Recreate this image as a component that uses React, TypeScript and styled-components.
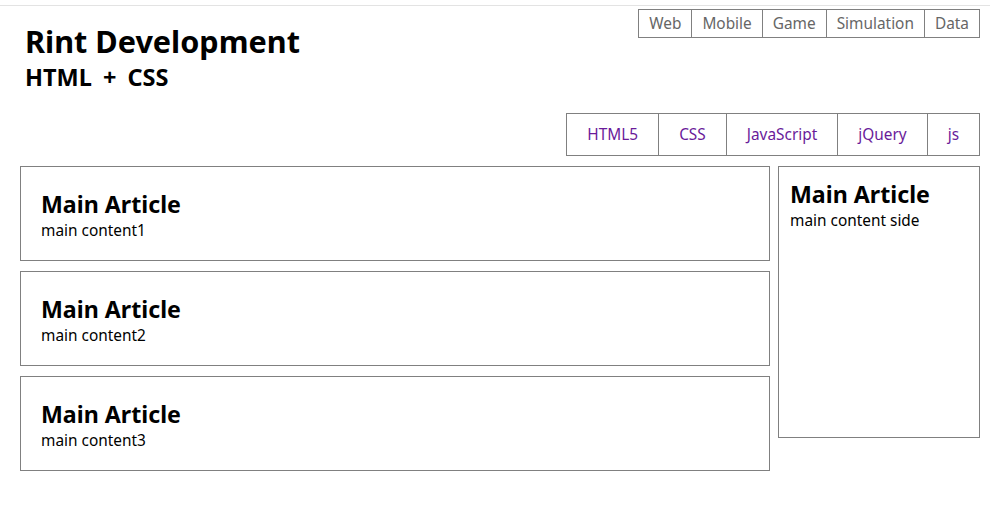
import React from 'react';
import styled, { createGlobalStyle } from 'styled-components';

const GlobalStyle = createGlobalStyle`
    body {
        margin: 0;
        font-family: "Noto Sans", "Noto Sans CJK KR", sans-serif;
        color: #000;
        background: #fff;
    }
`;

const TopRule = styled.div`
    height: 5px;
    border-bottom: 1px solid #e3e3e3;
`;

const Page = styled.div`
    width: 960px;
    padding: 3px 10px 0 20px;
`;

const Header = styled.header`
    display: flex;
    justify-content: space-between;
    align-items: flex-start;
    height: 104px;
`;

const TitleBlock = styled.div`
    padding: 13px 0 0 5px;
`;

const Title = styled.h1`
    margin: 0;
    font-size: 30.6px;
    line-height: 38px;
    font-weight: 700;
`;

const SubTitle = styled.h2`
    margin: 2px 0 0;
    font-size: 23.5px;
    line-height: 30px;
    font-weight: 700;
    word-spacing: 5px;
`;

const TopMenu = styled.ul`
    display: flex;
    margin: 0;
    padding: 0;
    list-style: none;
    border: 1px solid #808080;
`;

const TopItem = styled.li`
    padding: 1px 10px 0;
    font-size: 15.4px;
    line-height: 26px;
    color: #666;
    & + & {
        border-left: 1px solid #808080;
    }
`;

const SubNavRow = styled.nav`
    display: flex;
    justify-content: flex-end;
    margin-bottom: 10px;
`;

const SubMenu = styled.ul`
    display: flex;
    margin: 0;
    padding: 0;
    list-style: none;
    border: 1px solid #808080;
`;

const SubItem = styled.li`
    padding: 1px 20px 0;
    font-size: 15.4px;
    line-height: 40px;
    & + & {
        border-left: 1px solid #808080;
    }
`;

const SubLink = styled.a`
    color: #6a1b9a;
    text-decoration: none;
`;

const Content = styled.div`
    display: flex;
    align-items: flex-start;
    gap: 8px;
`;

const MainColumn = styled.section`
    display: flex;
    flex-direction: column;
    gap: 10px;
    width: 750px;
`;

const Article = styled.article<{ $side?: boolean }>`
    box-sizing: border-box;
    border: 1px solid #808080;
    padding: ${(p) => (p.$side ? '12px 11px' : '22px 20px')};
    height: ${(p) => (p.$side ? '272px' : '95px')};
    width: ${(p) => (p.$side ? '202px' : '750px')};
`;

const ArticleTitle = styled.h3`
    margin: 0;
    font-size: 23.2px;
    line-height: 30px;
    font-weight: 700;
`;

const ArticleText = styled.p`
    margin: 1px 0 0;
    font-size: 15.4px;
    line-height: 22px;
`;

const topMenu = ['Web', 'Mobile', 'Game', 'Simulation', 'Data'];
const subMenu = ['HTML5', 'CSS', 'JavaScript', 'jQuery', 'js'];

export default function App() {
    return (
        <>
            <GlobalStyle />
            <TopRule />
            <Page>
                <Header>
                    <TitleBlock>
                        <Title>Rint Development</Title>
                        <SubTitle>HTML + CSS</SubTitle>
                    </TitleBlock>
                    <TopMenu>
                        {topMenu.map((m) => (
                            <TopItem key={m}>{m}</TopItem>
                        ))}
                    </TopMenu>
                </Header>
                <SubNavRow>
                    <SubMenu>
                        {subMenu.map((m) => (
                            <SubItem key={m}>
                                <SubLink href="#">{m}</SubLink>
                            </SubItem>
                        ))}
                    </SubMenu>
                </SubNavRow>
                <Content>
                    <MainColumn>
                        {[1, 2, 3].map((n) => (
                            <Article key={n}>
                                <ArticleTitle>Main Article</ArticleTitle>
                                <ArticleText>main content{n}</ArticleText>
                            </Article>
                        ))}
                    </MainColumn>
                    <Article $side>
                        <ArticleTitle>Main Article</ArticleTitle>
                        <ArticleText>main content side</ArticleText>
                    </Article>
                </Content>
            </Page>
        </>
    );
}
